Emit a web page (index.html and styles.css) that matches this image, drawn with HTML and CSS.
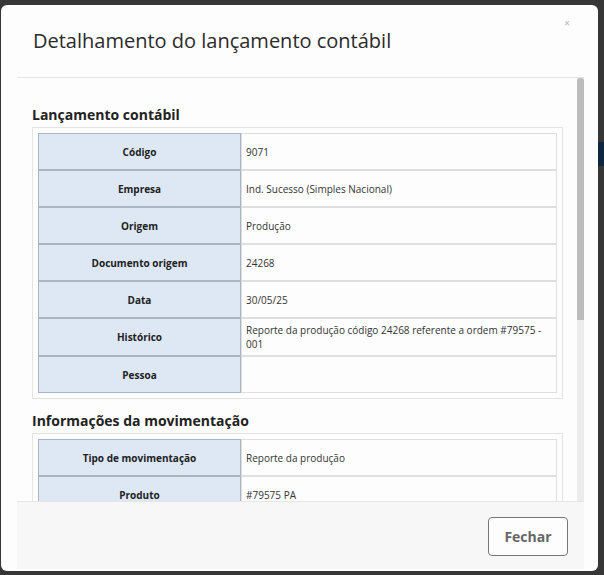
FILE: index.html
```html
<!DOCTYPE html>
<html lang="pt-BR">
<head>
<meta charset="utf-8">
<title>Detalhamento do lançamento contábil</title>
<link rel="stylesheet" href="styles.css">
</head>
<body>
<div class="modal">
  <div class="modal-header">
    <h2 class="modal-title">Detalhamento do lançamento contábil</h2>
    <span class="close">×</span>
  </div>
  <div class="modal-body">
    <div class="scroll-content">
      <h3 class="section-title">Lançamento contábil</h3>
      <div class="box">
        <table class="details">
          <tr><th>Código</th><td>9071</td></tr>
          <tr><th>Empresa</th><td>Ind. Sucesso (Simples Nacional)</td></tr>
          <tr><th>Origem</th><td>Produção</td></tr>
          <tr><th>Documento origem</th><td>24268</td></tr>
          <tr><th>Data</th><td>30/05/25</td></tr>
          <tr><th>Histórico</th><td>Reporte da produção código 24268 referente a ordem #79575 - 001</td></tr>
          <tr><th>Pessoa</th><td></td></tr>
        </table>
      </div>
      <h3 class="section-title second">Informações da movimentação</h3>
      <div class="box">
        <table class="details">
          <tr><th>Tipo de movimentação</th><td>Reporte da produção</td></tr>
          <tr><th>Produto</th><td>#79575 PA</td></tr>
        </table>
      </div>
    </div>
    <div class="scrollbar"><div class="thumb"></div></div>
  </div>
  <div class="modal-footer">
    <button class="btn">Fechar</button>
  </div>
</div>
</body>
</html>
```
FILE: styles.css
```css
html, body {
  margin: 0;
  height: 575px;
}
body {
  box-sizing: border-box;
  padding: 5px 6px 4px 1px;
  background:
    linear-gradient(#0f2640, #0f2640) no-repeat right 0 top 142px / 6px 24px,
    #363636;
  font-family: "Open Sans", "Liberation Sans", sans-serif;
  overflow: hidden;
}
.modal {
  box-sizing: border-box;
  width: 597px;
  height: 566px;
  background: #fdfdfd;
  border-radius: 6px;
  padding: 0 14px 2px 16px;
  display: flex;
  flex-direction: column;
}
.modal-header {
  position: relative;
  padding: 22px 0 22px 16px;
  border-bottom: 1px solid #e4e4e4;
}
.modal-title {
  margin: 0;
  font-size: 20px;
  line-height: 28px;
  font-weight: 400;
  color: #2b2b2b;
}
.close {
  position: absolute;
  top: 12px;
  right: 14px;
  font-size: 10px;
  line-height: 12px;
  color: #b5b5b5;
}
.modal-body {
  flex: 1;
  display: flex;
  overflow: hidden;
  min-height: 0;
}
.scroll-content {
  flex: 1;
  padding: 27px 14px 0 15px;
  overflow: hidden;
}
.scrollbar {
  width: 7px;
  background: #ececec;
}
.thumb {
  height: 242px;
  background: #bdbdbd;
  border-radius: 3px 3px 0 0;
}
.section-title {
  margin: 0 0 2px;
  font-size: 14px;
  line-height: 20px;
  font-weight: 700;
  color: #222;
}
.section-title.second {
  margin-top: 12px;
}
.box {
  border: 1px solid #e4e4e4;
  padding: 5px;
}
.details {
  width: 100%;
  border-collapse: separate;
  border-spacing: 0;
  table-layout: fixed;
  font-size: 10px;
  line-height: 14px;
  color: #333;
}
.details th,
.details td {
  height: 27px;
  padding: 4px 4px;
  vertical-align: middle;
}
.details th {
  box-sizing: border-box;
  width: 203px;
  height: 37px;
  background: #dde8f4;
  border: 1px solid #a9b5c2;
  font-weight: 700;
  color: #222;
  text-align: center;
}
.details td {
  border: 1px solid #dedede;
  text-align: left;
}
.modal-footer {
  height: 68px;
  box-sizing: border-box;
  background: #f7f7f7;
  border-top: 1px solid #e6e6e6;
  display: flex;
  justify-content: flex-end;
  align-items: flex-start;
  padding: 15px 16px 0 0;
}
.btn {
  width: 80px;
  height: 39px;
  border: 1px solid #777;
  border-radius: 4px;
  background: #fdfdfd;
  color: #666;
  font-family: "Open Sans", "Liberation Sans", sans-serif;
  font-size: 14px;
  font-weight: 700;
}
```
